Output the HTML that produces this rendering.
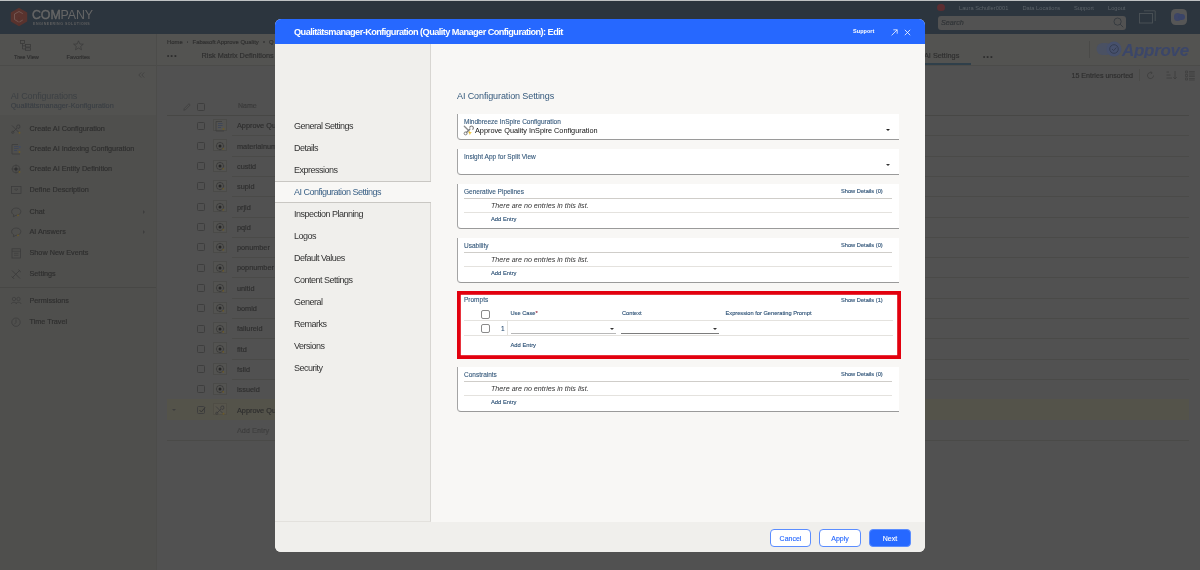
<!DOCTYPE html>
<html><head><meta charset="utf-8">
<style>
*{box-sizing:border-box;margin:0;padding:0}
html,body{width:1200px;height:570px;overflow:hidden}
body{position:relative;background:#515151;font-family:"Liberation Sans",sans-serif;}
.a{position:absolute;white-space:nowrap}
/* background app */
#topline{left:0;top:0;width:1200px;height:1px;background:#bfc2c3}
#hdr{left:0;top:1px;width:1200px;height:33px;background:#2c353e}
#leftp{left:0;top:34px;width:156px;height:536px;background:#4f4f4d}
#vsep{left:156px;top:34px;width:1px;height:536px;background:#4c4c4a}
.bgt{color:#2e2e2e;font-size:7.2px;-webkit-text-stroke:0.15px #2e2e2e}
.row-line{height:1px;background:#4a4a4a}
.bgh{font-size:5.7px;color:#5c6369;line-height:8px}
.cb{width:8px;height:8px;border:0.8px solid #3e3e3e;border-radius:1.5px}
.bgt{line-height:10px}
/* modal */
#modal{left:275px;top:19px;width:650px;height:533px;border-radius:6px;overflow:hidden;background:#f8f7f5}
#mh{left:0;top:0;width:650px;height:25px;background:#2668ff}
#nav{left:0;top:25px;width:156px;height:478px;background:#f0efec;border-right:1px solid #d8d6d2;border-bottom:1px solid #e3e1dd}
#foot{left:0;top:503px;width:650px;height:30px;background:#f0efec}
.nv{left:19px;font-size:9px;letter-spacing:-0.5px;color:#333}
.box{background:#fff;border-left:1px solid #a4a4a4;border-bottom:1.5px solid #9a9a9a;border-bottom-left-radius:4px}
.lbl{color:#33577a;font-size:6.5px;-webkit-text-stroke:0.1px #33577a}
.ln{height:1px;background:#d6d6d6}
.noe{font-style:italic;font-size:7.15px;color:#333}
.add{font-size:5.8px;color:#2a4f74;-webkit-text-stroke:0.12px #2a4f74}
.sd{font-size:5.7px;color:#2a4f74;-webkit-text-stroke:0.12px #2a4f74}
.btn{border:1px solid #5b8dff;border-radius:4px;background:#fff;color:#2668ff;font-size:7px;text-align:center;line-height:18px;-webkit-text-stroke:0.12px currentColor}
#root{position:absolute;left:0;top:0;width:1200px;height:570px;will-change:transform;overflow:hidden}
</style></head><body><div id="root">
<div class="a" id="topline"></div>
<div class="a" id="hdr"></div>
<div class="a" id="leftp"></div>
<div class="a" id="vsep"></div>

<!-- header content -->
<svg class="a" style="left:10px;top:7px" width="18" height="20" viewBox="0 0 18 20">
  <path d="M9 0.8 L17.2 5.4 L17.2 14.6 L9 19.2 L0.8 14.6 L0.8 5.4Z" fill="#59332e"/>
  <path d="M12.8 6.6 L9 4.5 L4.5 7 L4.5 12.5 L9 15.2 L12.8 13" fill="none" stroke="#7a5f5a" stroke-width="0.8"/>
  <path d="M9 10 L9 19" stroke="#553029" stroke-width="0.6"/>
</svg>
<div class="a" style="left:32px;top:7.5px;font-size:12.4px;color:#666;letter-spacing:-0.1px;line-height:14px"><span style="-webkit-text-stroke:0.4px #666">COM</span>PANY</div>
<div class="a" style="left:33px;top:21.5px;font-size:3.6px;color:#5f5f5f;letter-spacing:0.48px;font-weight:bold;line-height:4px">ENGINEERING SOLUTIONS</div>
<div class="a" style="left:937px;top:3.5px;width:7.5px;height:7.5px;border-radius:50%;background:#5c2d31"></div>
<div class="a bgh" style="left:959px;top:4px">Laura Schuller0001</div>
<div class="a bgh" style="left:1022.5px;top:4px">Data Locations</div>
<div class="a bgh" style="left:1074px;top:4px">Support</div>
<div class="a bgh" style="left:1108px;top:4px">Logout</div>
<div class="a" style="left:937.5px;top:15.5px;width:188.5px;height:14px;border-radius:3px;background:#525252"></div>
<div class="a" style="left:941px;top:18px;font-size:7.2px;font-style:italic;color:#2f3336;line-height:9px;-webkit-text-stroke:0.15px #2f3336">Search</div>
<svg class="a" style="left:1113px;top:17px" width="11" height="11" viewBox="0 0 11 11"><circle cx="4.6" cy="4.6" r="3.6" fill="none" stroke="#33393e" stroke-width="0.9"/><path d="M7.2 7.2 L10.2 10.2" stroke="#33393e" stroke-width="0.9"/></svg>
<svg class="a" style="left:1139px;top:10px" width="17" height="14" viewBox="0 0 17 14"><rect x="0.5" y="3.5" width="13" height="9.5" fill="none" stroke="#4c5257" stroke-width="0.9"/><path d="M5 0.8 H16.2 V11" fill="none" stroke="#4c5257" stroke-width="0.9"/></svg>
<div class="a" style="left:1171.2px;top:9.3px;width:15.8px;height:15.8px;border-radius:4.5px;background:#565656"></div>
<div class="a" style="left:1173.5px;top:13.2px;width:7.6px;height:7.6px;border-radius:50%;background:#3d4566"></div><div class="a" style="left:1177.5px;top:13.6px;width:7.4px;height:6.8px;border-radius:50%;background:#3a4468"></div>

<!-- left panel -->
<div class="a" style="left:0;top:34px;width:156px;height:81px;background:#525250"></div>
<div class="a" style="left:0;top:65px;width:156px;height:1px;background:#4b4b49"></div>
<svg class="a" style="left:20px;top:40px" width="12" height="11" viewBox="0 0 12 11"><rect x="0.5" y="0.5" width="4" height="3" fill="none" stroke="#3a3a3a" stroke-width="0.8"/><rect x="5.5" y="4.5" width="5" height="2.5" fill="none" stroke="#3a3a3a" stroke-width="0.8"/><rect x="5.5" y="7.8" width="5" height="2.5" fill="none" stroke="#3a3a3a" stroke-width="0.8"/><path d="M2.5 3.5 V9 H5.5 M2.5 5.8 H5.5" fill="none" stroke="#3a3a3a" stroke-width="0.8"/></svg>
<div class="a bgt" style="left:14px;top:51.5px;font-size:5.6px">Tree View</div>
<svg class="a" style="left:73px;top:39.5px" width="11" height="11" viewBox="0 0 11 11"><path d="M5.5 0.8 L6.9 4 L10.3 4.2 L7.7 6.4 L8.5 9.8 L5.5 8 L2.5 9.8 L3.3 6.4 L0.7 4.2 L4.1 4Z" fill="none" stroke="#3a3a3a" stroke-width="0.7"/></svg>
<div class="a bgt" style="left:66.5px;top:51.5px;font-size:5.7px">Favorites</div>
<svg class="a" style="left:137.5px;top:72px" width="7" height="6" viewBox="0 0 7 6"><path d="M3.2 0.5 L0.8 3 L3.2 5.5 M6.2 0.5 L3.8 3 L6.2 5.5" fill="none" stroke="#3e3e3e" stroke-width="0.7"/></svg>
<div class="a" style="left:10.7px;top:90.5px;font-size:9px;letter-spacing:-0.15px;color:#3c4044;line-height:11px">AI Configurations</div>
<div class="a" style="left:10.7px;top:100.5px;font-size:7.3px;color:#393e44;line-height:9px;-webkit-text-stroke:0.1px #393e44">Qualitätsmanager-Konfiguration</div>

<div class="a bgt" style="left:29.5px;top:123.5px;font-size:7.25px;line-height:10px">Create AI Configuration</div>
<div class="a bgt" style="left:29.5px;top:143.8px;font-size:7.25px;line-height:10px">Create AI Indexing Configuration</div>
<div class="a bgt" style="left:29.5px;top:164.4px;font-size:7.25px;line-height:10px">Create AI Entity Definition</div>
<div class="a bgt" style="left:29.5px;top:185.3px;font-size:7.25px;line-height:10px">Define Description</div>
<div class="a bgt" style="left:29.5px;top:206.5px;font-size:7.25px;line-height:10px">Chat</div>
<div class="a bgt" style="left:29.5px;top:226.8px;font-size:7.25px;line-height:10px">AI Answers</div>
<div class="a bgt" style="left:29.5px;top:248.0px;font-size:7.25px;line-height:10px">Show New Events</div>
<div class="a bgt" style="left:29.5px;top:268.5px;font-size:7.25px;line-height:10px">Settings</div>
<div class="a bgt" style="left:29.5px;top:295.5px;font-size:7.25px;line-height:10px">Permissions</div>
<div class="a bgt" style="left:29.5px;top:316.6px;font-size:7.25px;line-height:10px">Time Travel</div>
<div class="a" style="left:143px;top:209.5px;width:0;height:0;border-top:2px solid transparent;border-bottom:2px solid transparent;border-left:2.5px solid #3e3e3e"></div>
<div class="a" style="left:143px;top:229.8px;width:0;height:0;border-top:2px solid transparent;border-bottom:2px solid transparent;border-left:2.5px solid #3e3e3e"></div>
<svg class="a" style="left:10.5px;top:123.5px" width="11" height="11" viewBox="0 0 11 11"><path d="M1 1.5 L8 8.5 M8.5 1 L6.5 1 L5.5 3 L7 4.5 L9 3.5 Z M6 4 L1.8 8.2" stroke="#3c3c3c" stroke-width="0.9" fill="none"/><circle cx="1.8" cy="8.3" r="1.1" fill="none" stroke="#3c3c3c" stroke-width="0.8"/><circle cx="8.5" cy="8.8" r="1" fill="#6b5a2a"/></svg>
<svg class="a" style="left:10.5px;top:143.8px" width="11" height="11" viewBox="0 0 11 11"><path d="M1 0.5 V10 H9 M1 0.5 H7" stroke="#3c3c3c" stroke-width="0.8" fill="none"/><path d="M3 2.5 H7.5 M3 4.5 H7.5 M3 6.5 H6" stroke="#3f4656" stroke-width="1"/><circle cx="8.8" cy="3" r="0.9" fill="#3f4b66"/><circle cx="8.5" cy="8" r="1" fill="#6b5a2a"/></svg>
<svg class="a" style="left:10.5px;top:164.4px" width="11" height="11" viewBox="0 0 11 11"><circle cx="5" cy="5" r="3.8" fill="none" stroke="#3c3c3c" stroke-width="0.8"/><circle cx="5" cy="5" r="1.6" fill="#262626"/><path d="M5 0.5 V9.5 M0.5 5 H9.5" stroke="#3c3c3c" stroke-width="0.6"/><circle cx="8.5" cy="8" r="1" fill="#6b5a2a"/></svg>
<svg class="a" style="left:10.5px;top:185.3px" width="11" height="11" viewBox="0 0 11 11"><rect x="0.5" y="1.5" width="9.5" height="7" fill="none" stroke="#3c3c3c" stroke-width="0.8"/><path d="M3.5 4 H7 L5.2 5.8Z" fill="none" stroke="#3c3c3c" stroke-width="0.6"/></svg>
<svg class="a" style="left:10.5px;top:206.5px" width="11" height="11" viewBox="0 0 11 11"><path d="M5.2 1 C8.3 1 9.8 2.8 9.8 4.7 C9.8 6.8 7.8 8.3 5 8.3 L2.3 9.8 L2.8 7.8 C1.3 7 0.6 5.9 0.6 4.7 C0.6 2.8 2.2 1 5.2 1Z" fill="none" stroke="#3c3c3c" stroke-width="0.8"/><circle cx="7" cy="8.3" r="0.9" fill="#6b5a2a"/></svg>
<svg class="a" style="left:10.5px;top:226.8px" width="11" height="11" viewBox="0 0 11 11"><path d="M5.2 1 C8.3 1 9.8 2.8 9.8 4.7 C9.8 6.8 7.8 8.3 5 8.3 L2.3 9.8 L2.8 7.8 C1.3 7 0.6 5.9 0.6 4.7 C0.6 2.8 2.2 1 5.2 1Z" fill="none" stroke="#3c3c3c" stroke-width="0.8"/><circle cx="7" cy="8.3" r="0.9" fill="#6b5a2a"/></svg>
<svg class="a" style="left:10.5px;top:248.0px" width="11" height="11" viewBox="0 0 11 11"><rect x="1" y="0.8" width="8.5" height="9.2" fill="none" stroke="#3c3c3c" stroke-width="0.8"/><path d="M1 3.3 H9.5 M3 5.3 H7.5 M3 7.3 H7.5" stroke="#3c3c3c" stroke-width="0.6"/></svg>
<svg class="a" style="left:10.5px;top:268.5px" width="11" height="11" viewBox="0 0 11 11"><path d="M1 1.5 L9 9.5 M9 1 L1 9 M7.5 0.8 L9.8 3 M0.8 7.5 L3 9.8" stroke="#3c3c3c" stroke-width="0.9" fill="none"/></svg>
<svg class="a" style="left:10.5px;top:295.5px" width="11" height="11" viewBox="0 0 11 11"><circle cx="3" cy="3" r="1.7" fill="none" stroke="#3c3c3c" stroke-width="0.7"/><circle cx="7.5" cy="3" r="1.7" fill="none" stroke="#3c3c3c" stroke-width="0.7"/><path d="M0.3 8 C0.5 5.8 5.5 5.8 5.7 8 M4.8 8 C5 5.8 10 5.8 10.2 8" fill="none" stroke="#3c3c3c" stroke-width="0.7"/></svg>
<svg class="a" style="left:10.5px;top:316.6px" width="11" height="11" viewBox="0 0 11 11"><circle cx="5" cy="5.2" r="4.2" fill="none" stroke="#3c3c3c" stroke-width="0.8"/><path d="M5 2.5 V5.5 L3.3 7.3" fill="none" stroke="#3c3c3c" stroke-width="0.8"/></svg>
<div class="a" style="left:0;top:287px;width:156px;height:1px;background:#474745"></div>
<!-- main toolbar -->
<div class="a" style="left:157px;top:34px;width:1043px;height:31px;background:#535351"></div>
<div class="a" style="left:157px;top:65px;width:1043px;height:1px;background:#4b4b49"></div>
<div class="a bgt" style="left:167px;top:36.5px;font-size:5.9px">Home</div>
<div class="a" style="left:186.7px;top:41px;width:1.8px;height:1.8px;border-radius:50%;background:#383838"></div>
<div class="a bgt" style="left:192.6px;top:36.5px;font-size:5.9px">Fabasoft Approve Quality</div>
<div class="a" style="left:263.1px;top:41px;width:1.8px;height:1.8px;border-radius:50%;background:#383838"></div>
<div class="a bgt" style="left:269px;top:36.5px;font-size:5.9px">Q</div>
<div class="a bgt" style="left:167px;top:51px;font-size:6.5px;letter-spacing:1.3px">&#8226;&#8226;&#8226;</div>
<div class="a bgt" style="left:201.5px;top:50.5px;font-size:7.3px">Risk Matrix Definitions</div>
<div class="a bgt" style="left:924px;top:50.5px;font-size:7.3px">AI Settings</div>
<div class="a" style="left:925px;top:63px;width:46px;height:2px;background:#2f3f4a"></div>
<div class="a bgt" style="left:983px;top:51.5px;font-size:6.5px;letter-spacing:1.3px">&#8226;&#8226;&#8226;</div>
<div class="a" style="left:1088.5px;top:41px;width:1px;height:17px;background:#4a4a48"></div>
<svg class="a" style="left:1096px;top:40px" width="94" height="18" viewBox="0 0 94 18">
  <rect x="0.5" y="3" width="16" height="12" rx="6" fill="#4a5163"/>
  <circle cx="18" cy="9" r="7.5" fill="#46506c"/>
  <circle cx="18" cy="9" r="4.3" fill="none" stroke="#353d52" stroke-width="1"/>
  <path d="M16 9 L17.6 10.6 L20.3 7.6" fill="none" stroke="#353d52" stroke-width="1"/>
  <text x="26" y="15.5" font-family="Liberation Sans" font-weight="bold" font-style="italic" font-size="17" fill="#3b4669" letter-spacing="-0.3">Approve</text>
</svg>
<div class="a bgt" style="left:1071.5px;top:70.5px;font-size:7.1px">15 Entries unsorted</div>
<div class="a" style="left:1138.5px;top:69px;width:1px;height:12px;background:#4a4a48"></div>
<svg class="a" style="left:1146px;top:71px" width="9" height="9" viewBox="0 0 9 9"><path d="M7.5 4.5 A3 3 0 1 1 5.5 1.7" fill="none" stroke="#3e3e3e" stroke-width="0.8"/><path d="M4.6 0.6 L6.2 1.8 L4.8 3" fill="none" stroke="#3e3e3e" stroke-width="0.8"/></svg>
<svg class="a" style="left:1165.5px;top:70px" width="12" height="10" viewBox="0 0 12 10"><path d="M0.5 2 H3 M0.5 5 H4.5 M0.5 8 H6 M9 1 V9 M7.3 7.2 L9 9 L10.7 7.2" fill="none" stroke="#3e3e3e" stroke-width="0.8"/></svg>
<svg class="a" style="left:1185px;top:70px" width="10" height="11" viewBox="0 0 10 11"><path d="M0.5 1 H2.5 V3 H0.5Z M0.5 4.5 H2.5 V6.5 H0.5Z M0.5 8 H2.5 V10 H0.5Z M4 1.5 H9.8 M4 3 H9.8 M4 5 H9.8 M4 6.5 H9.8 M4 8.5 H9.8 M4 10 H9.8" fill="none" stroke="#3e3e3e" stroke-width="0.7"/></svg>

<!-- table -->
<svg class="a" style="left:183px;top:102.5px" width="8" height="8" viewBox="0 0 8 8"><path d="M0.8 7.2 L1.3 5.5 L6 0.8 L7.2 2 L2.5 6.7Z" fill="none" stroke="#3e3e3e" stroke-width="0.7"/></svg>
<div class="a cb" style="left:197px;top:102.5px"></div>
<div class="a bgt" style="left:238px;top:101px;font-size:7px;color:#404040">Name</div>
<div class="a" style="left:167px;top:115px;width:1022px;height:1px;background:#474745"></div>

<div class="a cb" style="left:197px;top:121.5px"></div>
<div class="a" style="left:212.5px;top:119.0px;width:14px;height:12px;border:0.6px solid #4a4a48;background:#535351"></div>
<svg class="a" style="left:214.5px;top:120.5px" width="11" height="11" viewBox="0 0 11 11"><path d="M1 0.5 V10 H9 M1 0.5 H7" stroke="#3c3c3c" stroke-width="0.8" fill="none"/><path d="M3 2.5 H7.5 M3 4.5 H7.5 M3 6.5 H6" stroke="#3f4656" stroke-width="1"/><circle cx="8.5" cy="8" r="1" fill="#6b5a2a"/></svg>
<div class="a bgt" style="left:237px;top:121.3px;font-size:7.3px;line-height:10px">Approve Qu</div>
<div class="a" style="left:231.7px;top:135.3px;width:957px;height:1px;background:#4a4a48"></div>
<div class="a cb" style="left:197px;top:141.8px"></div>
<div class="a" style="left:212.5px;top:139.3px;width:14px;height:12px;border:0.6px solid #4a4a48;background:#535351"></div>
<svg class="a" style="left:214.5px;top:140.8px" width="11" height="11" viewBox="0 0 11 11"><circle cx="5" cy="5" r="3.6" fill="none" stroke="#3a3a3a" stroke-width="0.8"/><circle cx="5" cy="5" r="1.5" fill="#262626"/><path d="M5 0.8 V2 M5 8 V9.2 M0.8 5 H2 M8 5 H9.2 M2 2 L2.8 2.8 M7.2 7.2 L8 8 M8 2 L7.2 2.8 M2 8 L2.8 7.2" stroke="#3a3a3a" stroke-width="0.7"/><circle cx="8.2" cy="7.8" r="0.9" fill="#6b5a2a"/></svg>
<div class="a bgt" style="left:237px;top:141.6px;font-size:7.3px;line-height:10px">materialnum</div>
<div class="a" style="left:231.7px;top:155.6px;width:957px;height:1px;background:#4a4a48"></div>
<div class="a cb" style="left:197px;top:162.1px"></div>
<div class="a" style="left:212.5px;top:159.6px;width:14px;height:12px;border:0.6px solid #4a4a48;background:#535351"></div>
<svg class="a" style="left:214.5px;top:161.1px" width="11" height="11" viewBox="0 0 11 11"><circle cx="5" cy="5" r="3.6" fill="none" stroke="#3a3a3a" stroke-width="0.8"/><circle cx="5" cy="5" r="1.5" fill="#262626"/><path d="M5 0.8 V2 M5 8 V9.2 M0.8 5 H2 M8 5 H9.2 M2 2 L2.8 2.8 M7.2 7.2 L8 8 M8 2 L7.2 2.8 M2 8 L2.8 7.2" stroke="#3a3a3a" stroke-width="0.7"/><circle cx="8.2" cy="7.8" r="0.9" fill="#6b5a2a"/></svg>
<div class="a bgt" style="left:237px;top:161.9px;font-size:7.3px;line-height:10px">custid</div>
<div class="a" style="left:231.7px;top:175.9px;width:957px;height:1px;background:#4a4a48"></div>
<div class="a cb" style="left:197px;top:182.4px"></div>
<div class="a" style="left:212.5px;top:179.9px;width:14px;height:12px;border:0.6px solid #4a4a48;background:#535351"></div>
<svg class="a" style="left:214.5px;top:181.4px" width="11" height="11" viewBox="0 0 11 11"><circle cx="5" cy="5" r="3.6" fill="none" stroke="#3a3a3a" stroke-width="0.8"/><circle cx="5" cy="5" r="1.5" fill="#262626"/><path d="M5 0.8 V2 M5 8 V9.2 M0.8 5 H2 M8 5 H9.2 M2 2 L2.8 2.8 M7.2 7.2 L8 8 M8 2 L7.2 2.8 M2 8 L2.8 7.2" stroke="#3a3a3a" stroke-width="0.7"/><circle cx="8.2" cy="7.8" r="0.9" fill="#6b5a2a"/></svg>
<div class="a bgt" style="left:237px;top:182.2px;font-size:7.3px;line-height:10px">supid</div>
<div class="a" style="left:231.7px;top:196.2px;width:957px;height:1px;background:#4a4a48"></div>
<div class="a cb" style="left:197px;top:202.7px"></div>
<div class="a" style="left:212.5px;top:200.2px;width:14px;height:12px;border:0.6px solid #4a4a48;background:#535351"></div>
<svg class="a" style="left:214.5px;top:201.7px" width="11" height="11" viewBox="0 0 11 11"><circle cx="5" cy="5" r="3.6" fill="none" stroke="#3a3a3a" stroke-width="0.8"/><circle cx="5" cy="5" r="1.5" fill="#262626"/><path d="M5 0.8 V2 M5 8 V9.2 M0.8 5 H2 M8 5 H9.2 M2 2 L2.8 2.8 M7.2 7.2 L8 8 M8 2 L7.2 2.8 M2 8 L2.8 7.2" stroke="#3a3a3a" stroke-width="0.7"/><circle cx="8.2" cy="7.8" r="0.9" fill="#6b5a2a"/></svg>
<div class="a bgt" style="left:237px;top:202.5px;font-size:7.3px;line-height:10px">prjid</div>
<div class="a" style="left:231.7px;top:216.5px;width:957px;height:1px;background:#4a4a48"></div>
<div class="a cb" style="left:197px;top:223.0px"></div>
<div class="a" style="left:212.5px;top:220.5px;width:14px;height:12px;border:0.6px solid #4a4a48;background:#535351"></div>
<svg class="a" style="left:214.5px;top:222.0px" width="11" height="11" viewBox="0 0 11 11"><circle cx="5" cy="5" r="3.6" fill="none" stroke="#3a3a3a" stroke-width="0.8"/><circle cx="5" cy="5" r="1.5" fill="#262626"/><path d="M5 0.8 V2 M5 8 V9.2 M0.8 5 H2 M8 5 H9.2 M2 2 L2.8 2.8 M7.2 7.2 L8 8 M8 2 L7.2 2.8 M2 8 L2.8 7.2" stroke="#3a3a3a" stroke-width="0.7"/><circle cx="8.2" cy="7.8" r="0.9" fill="#6b5a2a"/></svg>
<div class="a bgt" style="left:237px;top:222.8px;font-size:7.3px;line-height:10px">pqid</div>
<div class="a" style="left:231.7px;top:236.8px;width:957px;height:1px;background:#4a4a48"></div>
<div class="a cb" style="left:197px;top:243.3px"></div>
<div class="a" style="left:212.5px;top:240.8px;width:14px;height:12px;border:0.6px solid #4a4a48;background:#535351"></div>
<svg class="a" style="left:214.5px;top:242.3px" width="11" height="11" viewBox="0 0 11 11"><circle cx="5" cy="5" r="3.6" fill="none" stroke="#3a3a3a" stroke-width="0.8"/><circle cx="5" cy="5" r="1.5" fill="#262626"/><path d="M5 0.8 V2 M5 8 V9.2 M0.8 5 H2 M8 5 H9.2 M2 2 L2.8 2.8 M7.2 7.2 L8 8 M8 2 L7.2 2.8 M2 8 L2.8 7.2" stroke="#3a3a3a" stroke-width="0.7"/><circle cx="8.2" cy="7.8" r="0.9" fill="#6b5a2a"/></svg>
<div class="a bgt" style="left:237px;top:243.1px;font-size:7.3px;line-height:10px">ponumber</div>
<div class="a" style="left:231.7px;top:257.1px;width:957px;height:1px;background:#4a4a48"></div>
<div class="a cb" style="left:197px;top:263.6px"></div>
<div class="a" style="left:212.5px;top:261.1px;width:14px;height:12px;border:0.6px solid #4a4a48;background:#535351"></div>
<svg class="a" style="left:214.5px;top:262.6px" width="11" height="11" viewBox="0 0 11 11"><circle cx="5" cy="5" r="3.6" fill="none" stroke="#3a3a3a" stroke-width="0.8"/><circle cx="5" cy="5" r="1.5" fill="#262626"/><path d="M5 0.8 V2 M5 8 V9.2 M0.8 5 H2 M8 5 H9.2 M2 2 L2.8 2.8 M7.2 7.2 L8 8 M8 2 L7.2 2.8 M2 8 L2.8 7.2" stroke="#3a3a3a" stroke-width="0.7"/><circle cx="8.2" cy="7.8" r="0.9" fill="#6b5a2a"/></svg>
<div class="a bgt" style="left:237px;top:263.4px;font-size:7.3px;line-height:10px">popnumber</div>
<div class="a" style="left:231.7px;top:277.4px;width:957px;height:1px;background:#4a4a48"></div>
<div class="a cb" style="left:197px;top:283.9px"></div>
<div class="a" style="left:212.5px;top:281.4px;width:14px;height:12px;border:0.6px solid #4a4a48;background:#535351"></div>
<svg class="a" style="left:214.5px;top:282.9px" width="11" height="11" viewBox="0 0 11 11"><circle cx="5" cy="5" r="3.6" fill="none" stroke="#3a3a3a" stroke-width="0.8"/><circle cx="5" cy="5" r="1.5" fill="#262626"/><path d="M5 0.8 V2 M5 8 V9.2 M0.8 5 H2 M8 5 H9.2 M2 2 L2.8 2.8 M7.2 7.2 L8 8 M8 2 L7.2 2.8 M2 8 L2.8 7.2" stroke="#3a3a3a" stroke-width="0.7"/><circle cx="8.2" cy="7.8" r="0.9" fill="#6b5a2a"/></svg>
<div class="a bgt" style="left:237px;top:283.7px;font-size:7.3px;line-height:10px">unitid</div>
<div class="a" style="left:231.7px;top:297.7px;width:957px;height:1px;background:#4a4a48"></div>
<div class="a cb" style="left:197px;top:304.2px"></div>
<div class="a" style="left:212.5px;top:301.7px;width:14px;height:12px;border:0.6px solid #4a4a48;background:#535351"></div>
<svg class="a" style="left:214.5px;top:303.2px" width="11" height="11" viewBox="0 0 11 11"><circle cx="5" cy="5" r="3.6" fill="none" stroke="#3a3a3a" stroke-width="0.8"/><circle cx="5" cy="5" r="1.5" fill="#262626"/><path d="M5 0.8 V2 M5 8 V9.2 M0.8 5 H2 M8 5 H9.2 M2 2 L2.8 2.8 M7.2 7.2 L8 8 M8 2 L7.2 2.8 M2 8 L2.8 7.2" stroke="#3a3a3a" stroke-width="0.7"/><circle cx="8.2" cy="7.8" r="0.9" fill="#6b5a2a"/></svg>
<div class="a bgt" style="left:237px;top:304.0px;font-size:7.3px;line-height:10px">bomid</div>
<div class="a" style="left:231.7px;top:318.0px;width:957px;height:1px;background:#4a4a48"></div>
<div class="a cb" style="left:197px;top:324.5px"></div>
<div class="a" style="left:212.5px;top:322.0px;width:14px;height:12px;border:0.6px solid #4a4a48;background:#535351"></div>
<svg class="a" style="left:214.5px;top:323.5px" width="11" height="11" viewBox="0 0 11 11"><circle cx="5" cy="5" r="3.6" fill="none" stroke="#3a3a3a" stroke-width="0.8"/><circle cx="5" cy="5" r="1.5" fill="#262626"/><path d="M5 0.8 V2 M5 8 V9.2 M0.8 5 H2 M8 5 H9.2 M2 2 L2.8 2.8 M7.2 7.2 L8 8 M8 2 L7.2 2.8 M2 8 L2.8 7.2" stroke="#3a3a3a" stroke-width="0.7"/><circle cx="8.2" cy="7.8" r="0.9" fill="#6b5a2a"/></svg>
<div class="a bgt" style="left:237px;top:324.3px;font-size:7.3px;line-height:10px">failureid</div>
<div class="a" style="left:231.7px;top:338.3px;width:957px;height:1px;background:#4a4a48"></div>
<div class="a cb" style="left:197px;top:344.8px"></div>
<div class="a" style="left:212.5px;top:342.3px;width:14px;height:12px;border:0.6px solid #4a4a48;background:#535351"></div>
<svg class="a" style="left:214.5px;top:343.8px" width="11" height="11" viewBox="0 0 11 11"><circle cx="5" cy="5" r="3.6" fill="none" stroke="#3a3a3a" stroke-width="0.8"/><circle cx="5" cy="5" r="1.5" fill="#262626"/><path d="M5 0.8 V2 M5 8 V9.2 M0.8 5 H2 M8 5 H9.2 M2 2 L2.8 2.8 M7.2 7.2 L8 8 M8 2 L7.2 2.8 M2 8 L2.8 7.2" stroke="#3a3a3a" stroke-width="0.7"/><circle cx="8.2" cy="7.8" r="0.9" fill="#6b5a2a"/></svg>
<div class="a bgt" style="left:237px;top:344.6px;font-size:7.3px;line-height:10px">fltd</div>
<div class="a" style="left:231.7px;top:358.6px;width:957px;height:1px;background:#4a4a48"></div>
<div class="a cb" style="left:197px;top:365.1px"></div>
<div class="a" style="left:212.5px;top:362.6px;width:14px;height:12px;border:0.6px solid #4a4a48;background:#535351"></div>
<svg class="a" style="left:214.5px;top:364.1px" width="11" height="11" viewBox="0 0 11 11"><circle cx="5" cy="5" r="3.6" fill="none" stroke="#3a3a3a" stroke-width="0.8"/><circle cx="5" cy="5" r="1.5" fill="#262626"/><path d="M5 0.8 V2 M5 8 V9.2 M0.8 5 H2 M8 5 H9.2 M2 2 L2.8 2.8 M7.2 7.2 L8 8 M8 2 L7.2 2.8 M2 8 L2.8 7.2" stroke="#3a3a3a" stroke-width="0.7"/><circle cx="8.2" cy="7.8" r="0.9" fill="#6b5a2a"/></svg>
<div class="a bgt" style="left:237px;top:364.9px;font-size:7.3px;line-height:10px">fslid</div>
<div class="a" style="left:231.7px;top:378.9px;width:957px;height:1px;background:#4a4a48"></div>
<div class="a cb" style="left:197px;top:385.4px"></div>
<div class="a" style="left:212.5px;top:382.9px;width:14px;height:12px;border:0.6px solid #4a4a48;background:#535351"></div>
<svg class="a" style="left:214.5px;top:384.4px" width="11" height="11" viewBox="0 0 11 11"><circle cx="5" cy="5" r="3.6" fill="none" stroke="#3a3a3a" stroke-width="0.8"/><circle cx="5" cy="5" r="1.5" fill="#262626"/><path d="M5 0.8 V2 M5 8 V9.2 M0.8 5 H2 M8 5 H9.2 M2 2 L2.8 2.8 M7.2 7.2 L8 8 M8 2 L7.2 2.8 M2 8 L2.8 7.2" stroke="#3a3a3a" stroke-width="0.7"/><circle cx="8.2" cy="7.8" r="0.9" fill="#6b5a2a"/></svg>
<div class="a bgt" style="left:237px;top:385.2px;font-size:7.3px;line-height:10px">issueid</div>
<div class="a" style="left:231.7px;top:399.2px;width:957px;height:1px;background:#4a4a48"></div>
<div class="a" style="left:166.7px;top:399.2px;width:1022.5px;height:21px;background:#54534a"></div>
<div class="a" style="left:171.5px;top:408.7px;width:0;height:0;border-left:2px solid transparent;border-right:2px solid transparent;border-top:2.5px solid #3e3e3e"></div>
<div class="a cb" style="left:197px;top:405.7px"></div>
<svg class="a" style="left:197.5px;top:405.7px" width="8" height="8" viewBox="0 0 8 8"><path d="M1.5 4 L3.3 6 L7 1.5" fill="none" stroke="#333" stroke-width="0.9"/></svg>
<div class="a" style="left:212.5px;top:403.2px;width:14px;height:12px;border:0.6px solid #4f4d45;background:#57554c"></div>
<svg class="a" style="left:214.5px;top:404.7px" width="11" height="11" viewBox="0 0 11 11"><path d="M1 1.5 L8 8.5 M8.5 1 L6.5 1 L5.5 3 L7 4.5 L9 3.5 Z M6 4 L1.8 8.2" stroke="#3c3c3c" stroke-width="0.9" fill="none"/><circle cx="1.8" cy="8.3" r="1.1" fill="none" stroke="#3c3c3c" stroke-width="0.8"/><circle cx="8.5" cy="8.8" r="1" fill="#6b5a2a"/></svg>
<div class="a bgt" style="left:237px;top:405.5px;font-size:7.3px;line-height:10px">Approve Qu</div>
<div class="a bgt" style="left:237px;top:425.8px;font-size:7.3px;line-height:10px;color:#484848">Add Entry</div>
<div class="a" style="left:166.7px;top:439.5px;width:1022.5px;height:1px;background:#4a4a48"></div>
<!-- modal -->
<div class="a" id="modal">
  <div class="a" id="mh"></div>
  <div class="a" style="left:19px;top:6.5px;color:#fff;font-weight:bold;font-size:9.2px;letter-spacing:-0.56px;line-height:12px">Qualitätsmanager-Konfiguration (Quality Manager Configuration): Edit</div>
  <div class="a" style="left:578px;top:8px;color:#fff;font-weight:bold;font-size:5.5px;line-height:9px;letter-spacing:0.05px">Support</div>
  <svg class="a" style="left:615.5px;top:9.7px" width="7" height="7" viewBox="0 0 7 7"><path d="M0.6 6.4 L6.2 0.8 M2.3 0.8 H6.2 V4.7" fill="none" stroke="#fff" stroke-width="0.75"/></svg>
  <svg class="a" style="left:629.2px;top:9.7px" width="7" height="7" viewBox="0 0 7 7"><path d="M0.8 0.8 L6.2 6.2 M6.2 0.8 L0.8 6.2" fill="none" stroke="#fff" stroke-width="0.8"/></svg>
  <div id="nav" class="a"></div>
  <div id="foot" class="a"></div>
  <!-- nav items -->
  <div class="a nv" style="top:102px">General Settings</div>
  <div class="a nv" style="top:124px">Details</div>
  <div class="a nv" style="top:146px">Expressions</div>
  <div class="a" style="left:0;top:162px;width:156px;height:22px;background:#f8f7f5;border-top:1px solid #c9c7c3;border-bottom:1px solid #c9c7c3"></div>
  <div class="a nv" style="top:168px;color:#3d6388">AI Configuration Settings</div>
  <div class="a nv" style="top:190px">Inspection Planning</div>
  <div class="a nv" style="top:212px">Logos</div>
  <div class="a nv" style="top:234px">Default Values</div>
  <div class="a nv" style="top:256px">Content Settings</div>
  <div class="a nv" style="top:278px">General</div>
  <div class="a nv" style="top:300px">Remarks</div>
  <div class="a nv" style="top:322px">Versions</div>
  <div class="a nv" style="top:344px">Security</div>

  <!-- content -->
  <div class="a" style="left:182px;top:72px;font-size:9px;letter-spacing:-0.1px;color:#365a7d">AI Configuration Settings</div>

  <div class="a box" style="left:182px;top:95px;width:442px;height:26px"></div>
  <div class="a lbl" style="left:189px;top:99px">Mindbreeze InSpire Configuration</div>
  <svg class="a" style="left:188px;top:106px" width="11" height="11" viewBox="0 0 11 11">
    <path d="M1.3 1.3 L5.8 5.8" stroke="#8a8a8a" stroke-width="1.3" stroke-linecap="round" fill="none"/>
    <path d="M3 8 L7.3 3.6" stroke="#7a7a7a" stroke-width="1.3" fill="none"/>
    <path d="M6.6 2.6 A1.9 1.9 0 1 1 9.4 4.6" stroke="#7a7a7a" stroke-width="1.1" fill="none"/>
    <circle cx="2.6" cy="8.4" r="1.5" fill="none" stroke="#808080" stroke-width="1"/>
    <path d="M6.5 5.8 L7.4 7.3 L9 7.5 L7.6 8.3 L6.9 10.3 L6.3 8.3 L4.9 7.8 L6.2 7.3Z" fill="#f0be1e"/>
  </svg>
  <div class="a" style="left:200px;top:107px;font-size:7.3px;color:#111">Approve Quality InSpire Configuration</div>
  <div class="a" style="left:611px;top:110px;width:0;height:0;border-left:2px solid transparent;border-right:2px solid transparent;border-top:2.5px solid #222"></div>

  <div class="a box" style="left:182px;top:130px;width:442px;height:26px"></div>
  <div class="a lbl" style="left:189px;top:134px">Insight App for Split View</div>
  <div class="a" style="left:611px;top:145px;width:0;height:0;border-left:2px solid transparent;border-right:2px solid transparent;border-top:2.5px solid #333"></div>

  <div class="a box" style="left:182px;top:165px;width:442px;height:45px"></div>
  <div class="a lbl" style="left:189px;top:169px">Generative Pipelines</div>
  <div class="a sd" style="left:566px;top:169px">Show Details (0)</div>
  <div class="a ln" style="left:189px;top:179px;width:428px;background:#cfcdc9"></div>
  <div class="a noe" style="left:216px;top:183px">There are no entries in this list.</div>
  <div class="a ln" style="left:189px;top:193px;width:428px;background:#e4e2de"></div>
  <div class="a add" style="left:216px;top:197px">Add Entry</div>
  <div class="a box" style="left:182px;top:219px;width:442px;height:45px"></div>
  <div class="a lbl" style="left:189px;top:223px">Usability</div>
  <div class="a sd" style="left:566px;top:223px">Show Details (0)</div>
  <div class="a ln" style="left:189px;top:233px;width:428px;background:#cfcdc9"></div>
  <div class="a noe" style="left:216px;top:237px">There are no entries in this list.</div>
  <div class="a ln" style="left:189px;top:247px;width:428px;background:#e4e2de"></div>
  <div class="a add" style="left:216px;top:251px">Add Entry</div>

  <!-- prompts -->
  <div class="a" style="left:182px;top:272px;width:441px;height:68px;background:#fff"></div>
  <svg class="a" style="left:182px;top:272px" width="444" height="68"><rect x="1.9" y="1.9" width="440.2" height="64.2" fill="none" stroke="#e2000e" stroke-width="3.8"/></svg>
  <div class="a lbl" style="left:189px;top:277px">Prompts</div>
  <div class="a sd" style="left:566px;top:278px">Show Details (1)</div>
  <div class="a" style="left:206px;top:291px;width:9px;height:9px;border:1px solid #8a8a8a;border-radius:2px;background:#fff"></div>
  <div class="a sd" style="left:235.5px;top:291px">Use Case<span style="color:#e3000f">*</span></div>
  <div class="a sd" style="left:347px;top:291px">Context</div>
  <div class="a sd" style="left:450.5px;top:291px">Expression for Generating Prompt</div>
  <div class="a ln" style="left:189px;top:301px;width:429px;background:#e4e2de"></div>
  <div class="a" style="left:206px;top:305px;width:9px;height:9px;border:1px solid #8a8a8a;border-radius:2px;background:#fff"></div>
  <div class="a sd" style="left:226px;top:306px;font-size:6.5px">1</div>
  <div class="a" style="left:232px;top:302px;width:1px;height:15px;background:#e4e2de"></div>
  <div class="a" style="left:235.5px;top:314px;width:105px;height:1px;background:#b8b8b8"></div>
  <div class="a" style="left:335px;top:308.5px;width:0;height:0;border-left:2px solid transparent;border-right:2px solid transparent;border-top:2.5px solid #333"></div>
  <div class="a" style="left:346px;top:314px;width:98px;height:1px;background:#7c7c7c"></div>
  <div class="a" style="left:438px;top:308.5px;width:0;height:0;border-left:2px solid transparent;border-right:2px solid transparent;border-top:2.5px solid #333"></div>
  <div class="a ln" style="left:189px;top:316px;width:429px;background:#e4e2de"></div>
  <div class="a add" style="left:235.5px;top:323px">Add Entry</div>

  <div class="a box" style="left:182px;top:348px;width:442px;height:45px"></div>
  <div class="a lbl" style="left:189px;top:352px">Constraints</div>
  <div class="a sd" style="left:566px;top:352px">Show Details (0)</div>
  <div class="a ln" style="left:189px;top:362px;width:428px;background:#cfcdc9"></div>
  <div class="a noe" style="left:216px;top:366px">There are no entries in this list.</div>
  <div class="a ln" style="left:189px;top:376px;width:428px;background:#e4e2de"></div>
  <div class="a add" style="left:216px;top:380px">Add Entry</div>

  <!-- footer buttons -->
  <div class="a btn" style="left:495px;top:510px;width:41px;height:18px">Cancel</div>
  <div class="a btn" style="left:544px;top:510px;width:42px;height:18px">Apply</div>
  <div class="a btn" style="left:594px;top:510px;width:42px;height:18px;background:#2668ff;color:#fff">Next</div>
</div>
</div></body></html>
